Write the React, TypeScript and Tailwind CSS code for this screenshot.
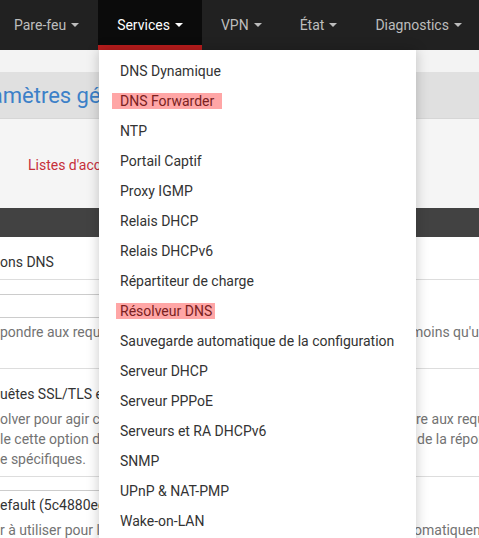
import React from "react";

const navItems = [
  { label: "Pare-feu", active: false },
  { label: "Services", active: true },
  { label: "VPN", active: false },
  { label: "État", active: false },
  { label: "Diagnostics", active: false },
];

const menuItems = [
  "DNS Dynamique",
  "DNS Forwarder",
  "NTP",
  "Portail Captif",
  "Proxy IGMP",
  "Relais DHCP",
  "Relais DHCPv6",
  "Répartiteur de charge",
  "Résolveur DNS",
  "Sauvegarde automatique de la configuration",
  "Serveur DHCP",
  "Serveur PPPoE",
  "Serveurs et RA DHCPv6",
  "SNMP",
  "UPnP & NAT-PMP",
  "Wake-on-LAN",
];

function Caret({ active }: { active: boolean }) {
  return (
    <span
      className={
        "ml-[5px] inline-block w-0 h-0 border-x-[4px] border-x-transparent border-t-[4px] " +
        (active ? "border-t-white" : "border-t-[#bdbdbd]")
      }
    />
  );
}

function MenuItem({ label }: { label: string }) {
  if (label === "DNS Forwarder") {
    return (
      <li className="px-[21px] py-[5px] leading-[20px]">
        <span className="-mx-[8px] px-[8px] bg-[#ffa6a6] text-[#7a2121]">{label}</span>
      </li>
    );
  }
  if (label === "Résolveur DNS") {
    return (
      <li className="px-[21px] py-[5px] leading-[20px]">
        <span className="-ml-[4px] pl-[4px] -mr-[3px] pr-[3px] bg-[#ffa6a6] text-[#7a2121]">{label}</span>
      </li>
    );
  }
  return <li className="px-[21px] py-[5px] leading-[20px] whitespace-nowrap">{label}</li>;
}

export default function App() {
  return (
    <div className="relative w-[479px] h-[538px] overflow-hidden bg-white font-['Roboto',sans-serif]">
      {/* barre de navigation */}
      <nav className="h-[50px] bg-[#212121] flex">
        <div className="flex -ml-[5px]">
          {navItems.map((it) => (
            <div
              key={it.label}
              className={
                "h-[50px] px-[19px] flex items-center text-[14px] whitespace-nowrap " +
                (it.active
                  ? "bg-[#0b0b0b] text-white border-b-[5px] border-[#b71c1c] pt-[5px]"
                  : "text-[#bdbdbd]")
              }
            >
              {it.label}
              <Caret active={it.active} />
            </div>
          ))}
        </div>
      </nav>

      {/* contenu de la page */}
      <div className="h-[22px] bg-[#f3f3f3]" />
      <div className="h-[47px] bg-[#e0e0e0] border-b border-[#d6d6d6] flex items-center overflow-hidden">
        <h1 className="-ml-[42px] text-[22px] text-[#3c80c8] whitespace-nowrap">Paramètres généraux</h1>
      </div>
      <div className="h-[89px] bg-[#f5f5f5] pt-[34px] pl-[28px]">
        <span className="text-[14px] leading-[20px] text-[#c62f3a]">Listes d'accès</span>
      </div>
      <div className="h-[29px] bg-[#424242]" />

      <div className="h-[43px] border-b border-[#dddddd] pt-[15px] text-[14px] leading-[20px] text-[#333]">
        ons DNS
      </div>

      <div className="h-[89px] border-b border-[#dddddd] pt-[14px] text-[14px] leading-[20px]">
        <div className="h-[24px] w-[380px] border-y border-[#cccccc]" />
        <div className="mt-[4px] flex text-[#737373] whitespace-nowrap">
          <span className="w-[411px] shrink-0">pondre aux requêtes DNS</span>
          <span>moins qu'un</span>
        </div>
      </div>

      <div className="h-[108px] border-b border-[#dddddd] pt-[15px] text-[14px] leading-[20px] whitespace-nowrap">
        <div className="text-[#333]">uêtes SSL/TLS entrantes</div>
        <div className="mt-[5px] flex text-[#737373]">
          <span className="w-[416px] shrink-0">olver pour agir comme</span>
          <span>re aux requêtes</span>
        </div>
        <div className="flex text-[#737373]">
          <span className="w-[417px] shrink-0">le cette option de</span>
          <span>de la réponse</span>
        </div>
        <div className="text-[#737373]">e spécifiques.</div>
      </div>

      <div className="pt-[13px] text-[14px] leading-[20px] whitespace-nowrap">
        <div className="h-[30px] w-[380px] border-t border-[#cccccc] pt-[4px] text-[#333]">efault (5c4880ec)</div>
        <div className="flex text-[#737373]">
          <span className="w-[414px] shrink-0">r à utiliser pour le</span>
          <span>omatiquement</span>
        </div>
      </div>

      {/* menu déroulant Services */}
      <ul className="absolute left-[99px] top-[50px] w-[317px] h-[500px] bg-white pt-[6px] text-[14px] text-[#333] shadow-[0_0_12px_rgba(0,0,0,0.22)]">
        {menuItems.map((m) => (
          <MenuItem key={m} label={m} />
        ))}
      </ul>
    </div>
  );
}
